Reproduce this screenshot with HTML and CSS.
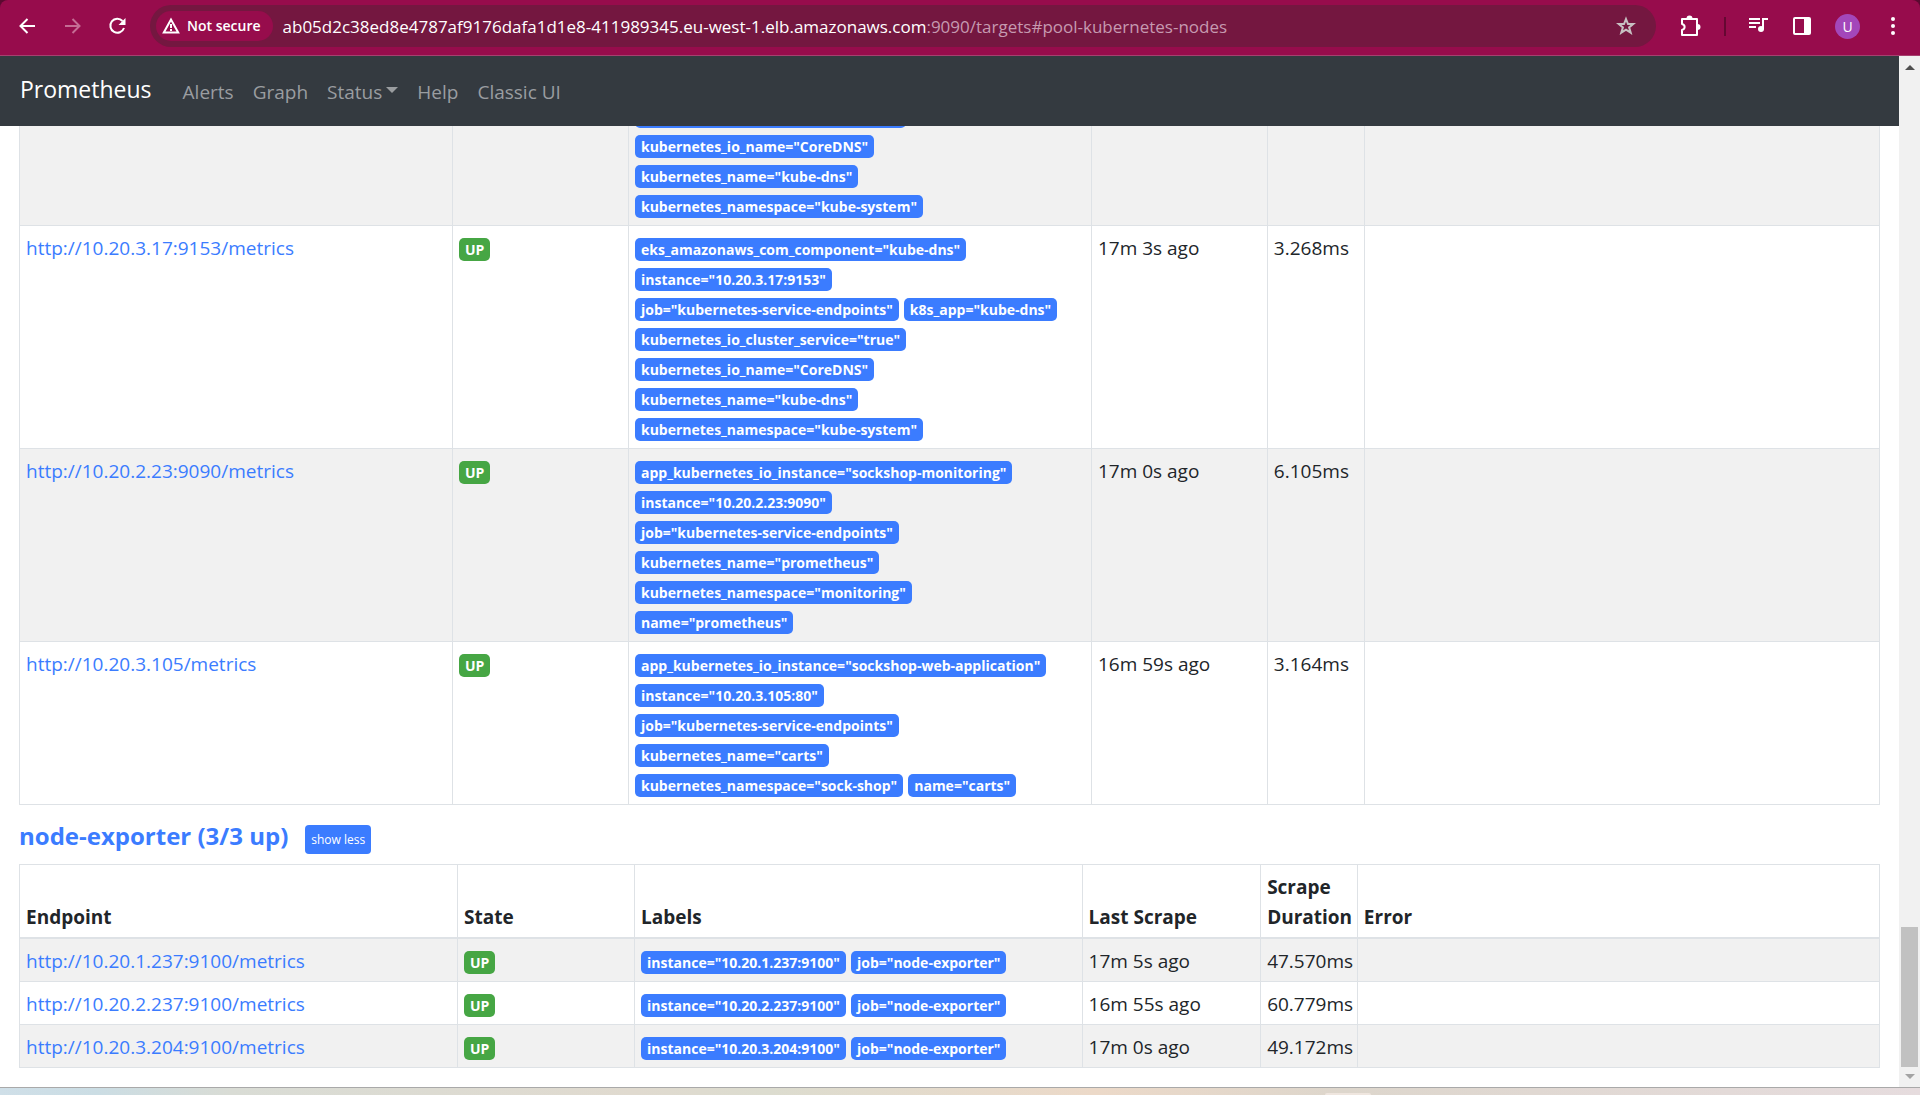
FILE: index.html
```html
<!DOCTYPE html>
<html lang="en">
<head>
<meta charset="utf-8">
<title>Prometheus</title>
<link rel="stylesheet" href="styles.css">
</head>
<body>
<div class="browser">
  <header class="toolbar">
    <div class="history">
      <button class="tool" aria-label="Back"><svg width="20" height="20" viewBox="0 0 20 20" fill="none" stroke="currentColor" stroke-width="2"><path d="M18 10H4.500M10.500 3l-7 7 7 7"/></svg></button>
      <button class="tool tool-off" aria-label="Forward" disabled><svg width="20" height="20" viewBox="0 0 20 20" fill="none" stroke="currentColor" stroke-width="2"><path d="M3 10h13.500M10.500 3l7 7-7 7"/></svg></button>
      <button class="tool" aria-label="Reload"><svg width="20" height="20" viewBox="0 0 20 20" fill="none" stroke="currentColor" stroke-width="2"><path d="M15.500 5A7 7 0 1 0 17 12"/><path d="M18.500 2v7h-7z" fill="currentColor" stroke="none"/></svg></button>
    </div>
    <div class="address">
      <button class="chip"><svg width="18" height="18" viewBox="0 0 18 18" fill="none" stroke="currentColor" stroke-width="2"><path d="M9 2.500 1.800 15.500h14.400z"/><path d="M9 7v4M9 12v2"/></svg>Not secure</button>
      <div class="url" role="textbox" aria-label="Address" contenteditable="true" spellcheck="false">ab05d2c38ed8e4787af9176dafa1d1e8-411989345.eu-west-1.elb.amazonaws.com<span class="url-path">:9090/targets#pool-kubernetes-nodes</span></div>
      <button class="star" aria-label="Bookmark this page"><svg width="20" height="20" viewBox="0 0 20 20" fill="none" stroke="currentColor" stroke-width="2"><path d="M10 3l2 5h5.300l-4.200 3.400 1.600 5.300L10 13.600l-4.700 3.100 1.600-5.300L2.700 8H8z"/></svg></button>
    </div>
    <div class="actions">
      <button class="tool" aria-label="Extensions"><svg width="22" height="22" viewBox="0 0 22 22" fill="none" stroke="currentColor" stroke-width="2"><path d="M3 4h15v16H3v-5c3.500-1 3.500-5 0-6z" stroke-linejoin="round"/><path d="M7.500 3.500a3 3 0 0 1 6 0zM18.500 9a3 3 0 0 1 0 6z" fill="currentColor" stroke="none"/></svg></button>
      <span class="divider"></span>
      <button class="tool" aria-label="Media controls"><svg width="20" height="20" viewBox="0 0 20 20" fill="none" stroke="currentColor" stroke-width="2"><path d="M0 3h11M0 7h11M0 11h7M14 13V3h5"/><circle cx="12" cy="13" r="3" fill="currentColor" stroke="none"/></svg></button>
      <button class="tool" aria-label="Side panel"><svg width="20" height="20" viewBox="0 0 20 20"><rect x="2" y="2" width="16" height="16" rx="1" fill="none" stroke="currentColor" stroke-width="2"/><path d="M12 2h6v16h-6z" fill="currentColor"/></svg></button>
      <button class="avatar" aria-label="Profile">U</button>
      <button class="tool" aria-label="Menu"><svg width="20" height="20" viewBox="0 0 20 20" fill="currentColor"><circle cx="10" cy="3" r="2"/><circle cx="10" cy="10" r="2"/><circle cx="10" cy="17" r="2"/></svg></button>
    </div>
  </header>
  <div class="viewport">
    <div class="page">
      <nav class="navbar">
        <a class="brand" href="#">Prometheus</a>
        <a class="nav-link" href="#">Alerts</a>
        <a class="nav-link" href="#">Graph</a>
        <a class="nav-link nav-drop" href="#">Status</a>
        <a class="nav-link" href="#">Help</a>
        <a class="nav-link" href="#">Classic UI</a>
      </nav>
      <main class="content">
        <table class="targets endpoints">
          <colgroup><col class="c-endpoint"><col class="c-state"><col class="c-labels"><col class="c-last"><col class="c-duration"><col></colgroup>
          <tbody>
            <tr><td></td><td></td><td><div class="labels"><span class="badge">kubernetes_io_cluster_service="true"</span><span class="badge">kubernetes_io_name="CoreDNS"</span><span class="badge">kubernetes_name="kube-dns"</span><span class="badge">kubernetes_namespace="kube-system"</span></div></td><td></td><td></td><td></td></tr>
            <tr><td><a href="#">http://10.20.3.17:9153/metrics</a></td><td><span class="state"><span class="badge up">UP</span></span></td><td><div class="labels"><span class="badge">eks_amazonaws_com_component="kube-dns"</span><span class="badge">instance="10.20.3.17:9153"</span><span class="badge">job="kubernetes-service-endpoints"</span><span class="badge">k8s_app="kube-dns"</span><span class="badge">kubernetes_io_cluster_service="true"</span><span class="badge">kubernetes_io_name="CoreDNS"</span><span class="badge">kubernetes_name="kube-dns"</span><span class="badge">kubernetes_namespace="kube-system"</span></div></td><td>17m 3s ago</td><td>3.268ms</td><td></td></tr>
            <tr><td><a href="#">http://10.20.2.23:9090/metrics</a></td><td><span class="state"><span class="badge up">UP</span></span></td><td><div class="labels"><span class="badge">app_kubernetes_io_instance="sockshop-monitoring"</span><span class="badge">instance="10.20.2.23:9090"</span><span class="badge">job="kubernetes-service-endpoints"</span><span class="badge">kubernetes_name="prometheus"</span><span class="badge">kubernetes_namespace="monitoring"</span><span class="badge">name="prometheus"</span></div></td><td>17m 0s ago</td><td>6.105ms</td><td></td></tr>
            <tr><td><a href="#">http://10.20.3.105/metrics</a></td><td><span class="state"><span class="badge up">UP</span></span></td><td><div class="labels"><span class="badge">app_kubernetes_io_instance="sockshop-web-application"</span><span class="badge">instance="10.20.3.105:80"</span><span class="badge">job="kubernetes-service-endpoints"</span><span class="badge">kubernetes_name="carts"</span><span class="badge">kubernetes_namespace="sock-shop"</span><span class="badge">name="carts"</span></div></td><td>16m 59s ago</td><td>3.164ms</td><td></td></tr>
          </tbody>
        </table>
        <div class="pool-head">
          <h3 class="pool-title"><a href="#">node-exporter (3/3 up)</a></h3>
          <button class="toggle">show less</button>
        </div>
        <table class="targets nodes">
          <colgroup><col class="c-endpoint"><col class="c-state"><col class="c-labels"><col class="c-last"><col class="c-duration"><col></colgroup>
          <thead><tr><th>Endpoint</th><th>State</th><th>Labels</th><th>Last Scrape</th><th>Scrape Duration</th><th>Error</th></tr></thead>
          <tbody>
            <tr><td><a href="#">http://10.20.1.237:9100/metrics</a></td><td><span class="state"><span class="badge up">UP</span></span></td><td><div class="labels"><span class="badge">instance="10.20.1.237:9100"</span><span class="badge">job="node-exporter"</span></div></td><td>17m 5s ago</td><td>47.570ms</td><td></td></tr>
            <tr><td><a href="#">http://10.20.2.237:9100/metrics</a></td><td><span class="state"><span class="badge up">UP</span></span></td><td><div class="labels"><span class="badge">instance="10.20.2.237:9100"</span><span class="badge">job="node-exporter"</span></div></td><td>16m 55s ago</td><td>60.779ms</td><td></td></tr>
            <tr><td><a href="#">http://10.20.3.204:9100/metrics</a></td><td><span class="state"><span class="badge up">UP</span></span></td><td><div class="labels"><span class="badge">instance="10.20.3.204:9100"</span><span class="badge">job="node-exporter"</span></div></td><td>17m 0s ago</td><td>49.172ms</td><td></td></tr>
          </tbody>
        </table>
      </main>
    </div>
    <div class="scrollbar"><span class="arrow arrow-up"></span><span class="thumb"></span><span class="arrow arrow-down"></span></div>
  </div>
  <footer class="desktop"><span class="peek"></span></footer>
</div>
</body>
</html>
```
FILE: styles.css
```css
* { box-sizing: border-box; }
body { margin: 0; font: 19px/30px "Open Sans", "Noto Sans", sans-serif; color: #212529; background: #fff; }
a { color: #3b7cff; text-decoration: none; }
button { border: 0; padding: 0; background: none; font: inherit; color: inherit; }
svg { display: block; }

.browser { height: 100vh; display: flex; flex-direction: column; background: #5a0a30; }

/* Browser toolbar */
.toolbar { flex: none; display: flex; align-items: center; height: 56px; padding: 0 17px 3px; gap: 23px; background: #970c4c; border-bottom: 1px solid #a6406f; border-radius: 8px 8px 0 0; color: #fff; }
.history { flex: none; display: flex; gap: 25px; }
.tool { flex: none; display: flex; }
.tool-off { color: #c56d94; }
.address { flex: 1; min-width: 0; display: flex; align-items: center; height: 42px; padding: 0 20px 0 6px; border-radius: 21px; background: #741740; }
.chip { flex: none; display: flex; align-items: center; gap: 7px; height: 30px; padding: 0 12px 0 6px; border-radius: 15px; background: #970c4c; font-size: 14px; font-weight: 600; }
.url { flex: 1; min-width: 0; margin-left: 10px; padding-top: 2px; overflow: hidden; white-space: nowrap; font-size: 17px; outline: 0; }
.url-path { color: #c69ab0; }
.star { color: #c7c0c2; }
.actions { flex: none; display: flex; align-items: center; gap: 23px; }
.divider { width: 2px; height: 19px; background: #650832; }
.avatar { width: 25px; height: 25px; border-radius: 50%; background: #a347ba; font-size: 14px; line-height: 25px; text-align: center; }

/* Page area and its scrollbar */
.viewport { flex: 1; min-height: 0; display: flex; background: #fff; }
.page { flex: 1; min-width: 0; display: flex; flex-direction: column; }
.navbar { flex: none; display: flex; align-items: center; gap: 19px; height: 70px; padding: 0 20px; background: #343a40; }
.brand { margin-right: 12px; padding-bottom: 5px; font-size: 23px; color: #fff; }
.nav-link { padding-top: 2px; color: #9a9da0; }
.nav-drop { display: flex; align-items: center; gap: 4px; }
.nav-drop::after { content: ""; margin-bottom: 4px; border: 6px solid transparent; border-top-color: currentColor; border-bottom: 0; }
.content { flex: 1; min-height: 0; overflow: hidden; display: flex; flex-direction: column; justify-content: flex-end; padding: 0 19px 19px; }

.targets { flex: none; width: 100%; table-layout: fixed; border-collapse: collapse; }
.targets th, .targets td { padding: 7px 6px 5px; border: 1px solid #dee2e6; text-align: left; vertical-align: top; }
.targets th { vertical-align: bottom; border-bottom-width: 2px; font-weight: 700; }
.targets tbody tr:nth-child(odd) { background: #f1f1f1; }
.endpoints .c-endpoint { width: 23.28%; }
.endpoints .c-state { width: 9.46%; }
.endpoints .c-labels { width: 24.89%; }
.endpoints .c-last { width: 9.46%; }
.endpoints .c-duration { width: 5.22%; }
.nodes .c-endpoint { width: 23.55%; }
.nodes .c-state { width: 9.52%; }
.nodes .c-labels { width: 24.06%; }
.nodes .c-last { width: 9.6%; }
.nodes .c-duration { width: 5.2%; }

.state { display: flex; padding: 5px 0 2px; }
.labels { display: flex; flex-wrap: wrap; gap: 7px 5px; padding: 5px 16px 2px 0; }
.badge { height: 23px; padding: 0 6px; border-radius: 5px; background: #3b7cff; color: #fff; font-size: 14px; font-weight: 700; line-height: 23px; white-space: nowrap; }
.badge.up { background: #46a644; }

.pool-head { flex: none; display: flex; align-items: flex-start; gap: 17px; height: 59px; padding-top: 15px; }
.pool-title { margin: 0; font-size: 24px; line-height: 32px; font-weight: 700; }
.toggle { height: 29px; margin-top: 5px; padding: 0 6px; border-radius: 4px; background: #3b7cff; color: #fff; font-size: 12px; }

.scrollbar { flex: none; display: flex; flex-direction: column; align-items: center; width: 21px; padding: 9px 0 8px; background: #f1f1f1; }
.arrow { border: 5px solid transparent; }
.arrow-up { border-bottom-color: #505050; border-top: 0; }
.arrow-down { border-top-color: #a3a3a3; border-bottom: 0; }
.thumb { width: 17px; height: 140px; margin: auto 0 7px; background: #c1c1c1; }

.desktop { flex: none; height: 8px; border-top: 1px solid #a9a9a9; background: linear-gradient(90deg, #cfdfe8 0, #cbdde4 5%, #d9dcd5 12%, #e0dacf 33%, #dcdccf 40%, #ecd9c8 57%, #ddd6cc 70%, #e6dcde 100%); }
.peek { display: block; width: 46px; height: 2px; margin: 5px 0 0 69%; border-radius: 2px 2px 0 0; background: #efe6df; }
```
